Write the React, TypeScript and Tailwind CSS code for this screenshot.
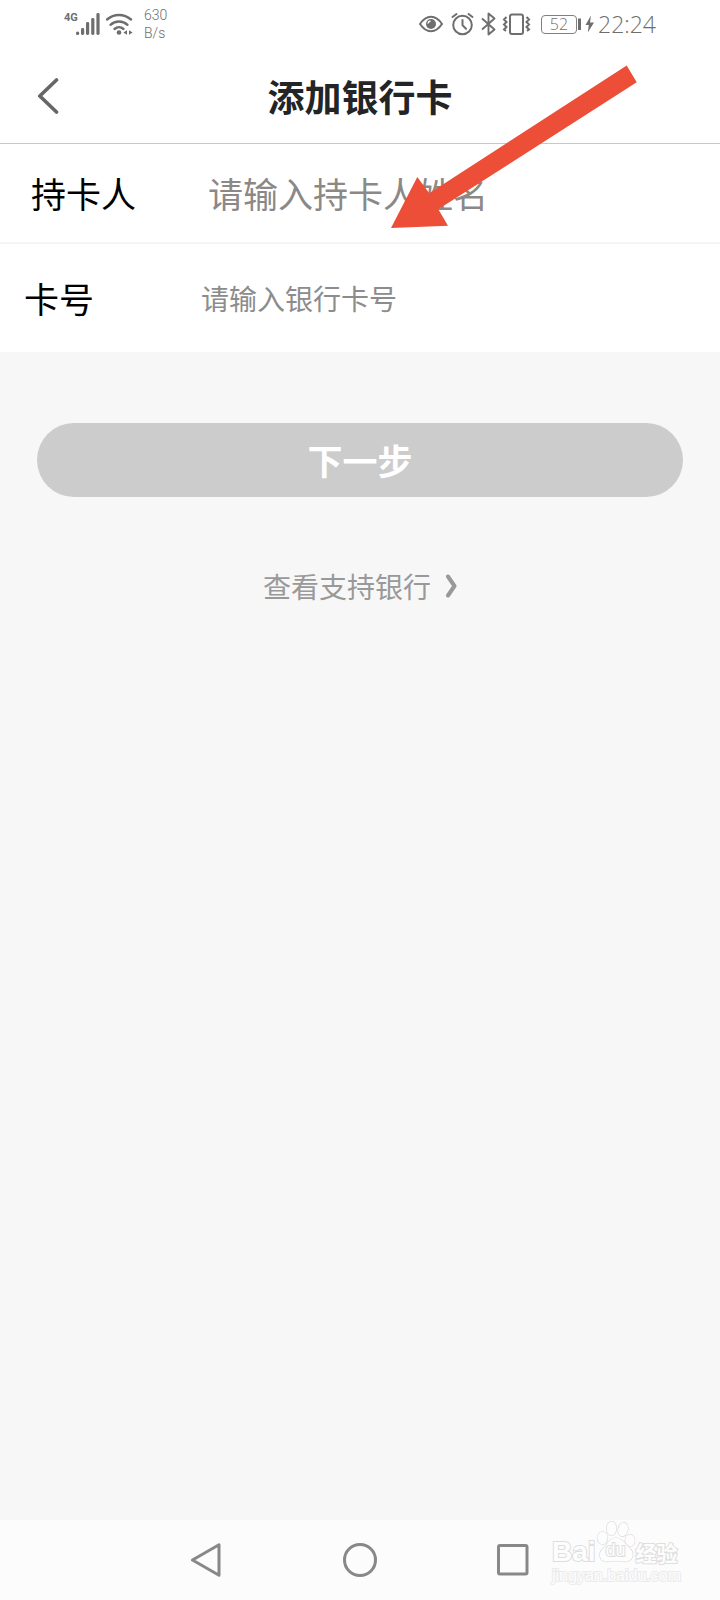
import React, { useState } from 'react';

const StatusBar: React.FC = () => (
  <div className="flex h-12 items-center justify-between pl-16 pr-16 text-[#6e6e6e]">
    <div className="flex items-center">
      <span className="mb-3 w-3 font-['Roboto'] text-[11px] leading-3 font-bold">4G</span>
      <svg className="h-6 w-6" viewBox="0 0 24 24" fill="currentColor" aria-hidden="true">
        <rect x="0" y="19.500" width="3.200" height="3.500" rx="1.500" />
        <rect x="5" y="16" width="3.200" height="7" rx="1.400" />
        <rect x="10" y="10" width="3.200" height="13" rx="1.400" />
        <rect x="15.200" y="6" width="3.200" height="17" rx="1.400" />
        <rect x="20.400" y="1" width="3.200" height="22" rx="1.400" />
      </svg>
      <svg className="ml-1.5 h-6 w-7" viewBox="0 0 28 24" fill="none" stroke="currentColor" strokeWidth="2.400" strokeLinecap="round" aria-hidden="true">
        <path d="M1 7.500C8 1.400 18 1.400 25 7.500" />
        <path d="M4.500 12.800c4.800-4.400 12.200-4.400 17 0" />
        <path d="M8.500 17c2.700-2.500 6.300-2.500 9 0" />
        <circle cx="13" cy="20.500" r="2.300" fill="currentColor" stroke="none" />
        <path d="M21 18.200v4.600l-3.600-2.300zM23 18.200v4.600l3.600-2.300z" fill="currentColor" stroke="none" />
      </svg>
      <div className="ml-2.5 flex flex-col font-['Roboto'] text-sm leading-[18px] font-light">
        <span>630</span>
        <span>B/s</span>
      </div>
    </div>

    <div className="flex items-center">
      {/* ojo */}
      <svg className="h-6 w-6" viewBox="0 0 24 24" fill="none" stroke="currentColor" strokeWidth="2" aria-hidden="true">
        <path d="M1 12c3-4.500 7-7.200 11-7.200s8 2.700 11 7.200c-3 4.500-7 7.200-11 7.200S4 16.500 1 12z" strokeLinejoin="round" />
        <circle cx="12" cy="12" r="5" fill="currentColor" stroke="none" />
        <path d="M9 11.500a3 3 0 0 1 2.500-2.500" stroke="#fff" strokeWidth="1.600" />
      </svg>
      {/* alarma */}
      <svg className="ml-2 h-6 w-6" viewBox="0 0 24 24" fill="none" stroke="currentColor" strokeWidth="2" strokeLinecap="round" aria-hidden="true">
        <circle cx="11.500" cy="13" r="9.300" />
        <path d="M11.500 8v5.200l3.500 3.600M1.500 5l4-3M21.500 5l-4-3" />
      </svg>
      {/* bluetooth */}
      <svg className="ml-1 h-6 w-5" viewBox="0 0 20 24" fill="none" stroke="currentColor" strokeWidth="1.900" strokeLinejoin="round" aria-hidden="true">
        <path d="M3 6.500l12.500 11-6 5V1.500l6 5L3 17.500" />
      </svg>
      {/* vibración */}
      <svg className="ml-0.5 h-6 w-8" viewBox="0 0 32 24" fill="none" stroke="currentColor" strokeWidth="2" aria-hidden="true">
        <rect x="9" y="2.500" width="13" height="19.500" rx="2" />
        <path d="M5.500 5L3 7.500 5.500 10 3 12.500 5.500 15 3 17.500l2 1.500M25.500 5L28 7.500 25.500 10l2.500 2.500-2.500 2.500 2.500 2.500-2 1.500" />
      </svg>
      <span className="ml-2 flex h-[19px] w-9 items-center justify-center rounded border border-[#808080] font-['Open_Sans'] text-base leading-none font-light">
        52
      </span>
      <svg className="ml-px h-6 w-[18px]" viewBox="0 0 18 24" fill="currentColor" aria-hidden="true">
        <rect x="0" y="6.500" width="3" height="11.500" />
        <path d="M13 3.500L7.500 13h3.300L9.800 20.500 16 10.500h-4z" />
      </svg>
      <span className="ml-0.5 font-['Open_Sans'] text-[23px] leading-8 font-light">22:24</span>
    </div>
  </div>
);

const Arrow: React.FC = () => (
  <svg className="pointer-events-none absolute top-16 left-[390px] h-[166px] w-[248px]" viewBox="390 64 248 166" aria-hidden="true">
    <polygon
      points="626.700,65.500 636.700,82.300 438.300,209.300 448,225.700 391,228 417.300,177 429.300,193.300"
      fill="#ec4e38"
    />
  </svg>
);

const Watermark: React.FC = () => (
  <div className="pointer-events-none absolute right-10 bottom-3 w-32 whitespace-nowrap font-['Liberation_Sans'] text-[#fdfdfd] [paint-order:stroke_fill] [-webkit-text-stroke:2px_#dedede]">
    <div className="flex h-11 items-end leading-6 font-bold">
      <span className="text-[28px]">Bai</span>
      <div className="relative h-11 w-10 shrink-0">
        <svg className="h-11 w-10" viewBox="0 0 40 44" fill="#fdfdfd" stroke="#d8d8d8" strokeWidth="1.200" aria-hidden="true">
          <ellipse cx="6.500" cy="18" rx="5" ry="6.200" />
          <ellipse cx="15.500" cy="8.500" rx="4.800" ry="7" />
          <ellipse cx="27" cy="9.500" rx="4.800" ry="7" transform="rotate(12 27 9.500)" />
          <ellipse cx="34" cy="20.500" rx="4.800" ry="6" />
          <path d="M20 18c-7 0-9 7-13 10.500C2 33 3 41 10 41.500c4 .3 6-.8 10-.8s6 1.100 10 .8c7-.5 9-8 4-13C30 25 27 18 20 18z" />
        </svg>
        <span className="absolute inset-x-0 bottom-1 text-center text-lg leading-5 font-normal">du</span>
      </div>
      <span className="font-['Noto_Sans_CJK_SC'] text-[21px]">经验</span>
    </div>
    <p className="text-base leading-6 font-normal [-webkit-text-stroke:2px_#ebebeb]">jingyan.baidu.com</p>
  </div>
);

const App: React.FC = () => {
  const [holder, setHolder] = useState('');
  const [cardNumber, setCardNumber] = useState('');

  return (
    <div className="relative flex min-h-screen flex-col bg-[#f7f7f7] font-['Noto_Sans_CJK_SC',sans-serif]">
      <div className="bg-white">
        <StatusBar />

        <header className="relative flex h-24 items-center justify-center border-b border-[#c8c8c8]">
          <button type="button" aria-label="返回" className="absolute left-8">
            <svg className="h-9 w-8" viewBox="0 0 32 36" fill="none" stroke="#666" strokeWidth="3.600" strokeLinecap="round" strokeLinejoin="round">
              <path d="M24.500 2L7.800 18l16.700 16" />
            </svg>
          </button>
          <h1 className="text-[37px] leading-[48px] font-bold text-[#222426]">添加银行卡</h1>
        </header>

        <form>
          <div className="flex h-[100px] items-center border-b-2 border-[#f5f5f5] px-[31px]">
            <label htmlFor="holder" className="w-[177px] text-[35px] leading-[52px] text-black">持卡人</label>
            <input
              id="holder"
              type="text"
              value={holder}
              onChange={(e) => setHolder(e.target.value)}
              placeholder="请输入持卡人姓名"
              className="h-[52px] min-w-0 flex-1 text-[35px] text-black placeholder:text-[#8b8886] focus:outline-none"
            />
          </div>
          <div className="flex h-[108px] items-center px-6">
            <label htmlFor="card" className="w-[177px] text-[35px] leading-[52px] text-black">卡号</label>
            <input
              id="card"
              type="text"
              value={cardNumber}
              onChange={(e) => setCardNumber(e.target.value)}
              placeholder="请输入银行卡号"
              className="h-[52px] min-w-0 flex-1 text-[28px] text-black placeholder:text-[#8c8c8c] focus:outline-none"
            />
          </div>
        </form>
      </div>

      <main className="flex flex-1 flex-col items-center px-[37px] pt-[71px]">
        <button type="button" className="h-[74px] w-full rounded-full bg-[#ccc] text-[35px] leading-[52px] font-bold text-white">
          下一步
        </button>
        <a href="#" className="mt-[69px] flex items-center text-[28px] leading-10 text-[#999]">
          查看支持银行
          <svg className="ml-3.5 h-6 w-3" viewBox="0 0 12 24" fill="none" stroke="#999" strokeWidth="4" strokeLinecap="round" strokeLinejoin="round" aria-hidden="true">
            <path d="M3 2.500L9.500 12 3 21.500" />
          </svg>
        </a>
      </main>

      <nav className="relative flex h-20 items-center justify-center gap-30 bg-[#fcfcfc]">
        <button type="button" aria-label="后退">
          <svg className="h-[34px] w-[34px]" viewBox="0 0 34 34" fill="none" stroke="#888" strokeWidth="3" strokeLinejoin="round">
            <path d="M3.500 17L30 1.800v30.400z" />
          </svg>
        </button>
        <button type="button" aria-label="主页">
          <svg className="h-[34px] w-[34px]" viewBox="0 0 34 34" fill="none" stroke="#888" strokeWidth="3">
            <circle cx="17" cy="17" r="15.500" />
          </svg>
        </button>
        <button type="button" aria-label="最近任务">
          <svg className="h-[34px] w-[34px]" viewBox="0 0 34 34" fill="none" stroke="#888" strokeWidth="3">
            <rect x="1.500" y="2.500" width="28.500" height="28.500" rx="1.500" />
          </svg>
        </button>
        <Watermark />
      </nav>

      <Arrow />
    </div>
  );
};

export default App;
